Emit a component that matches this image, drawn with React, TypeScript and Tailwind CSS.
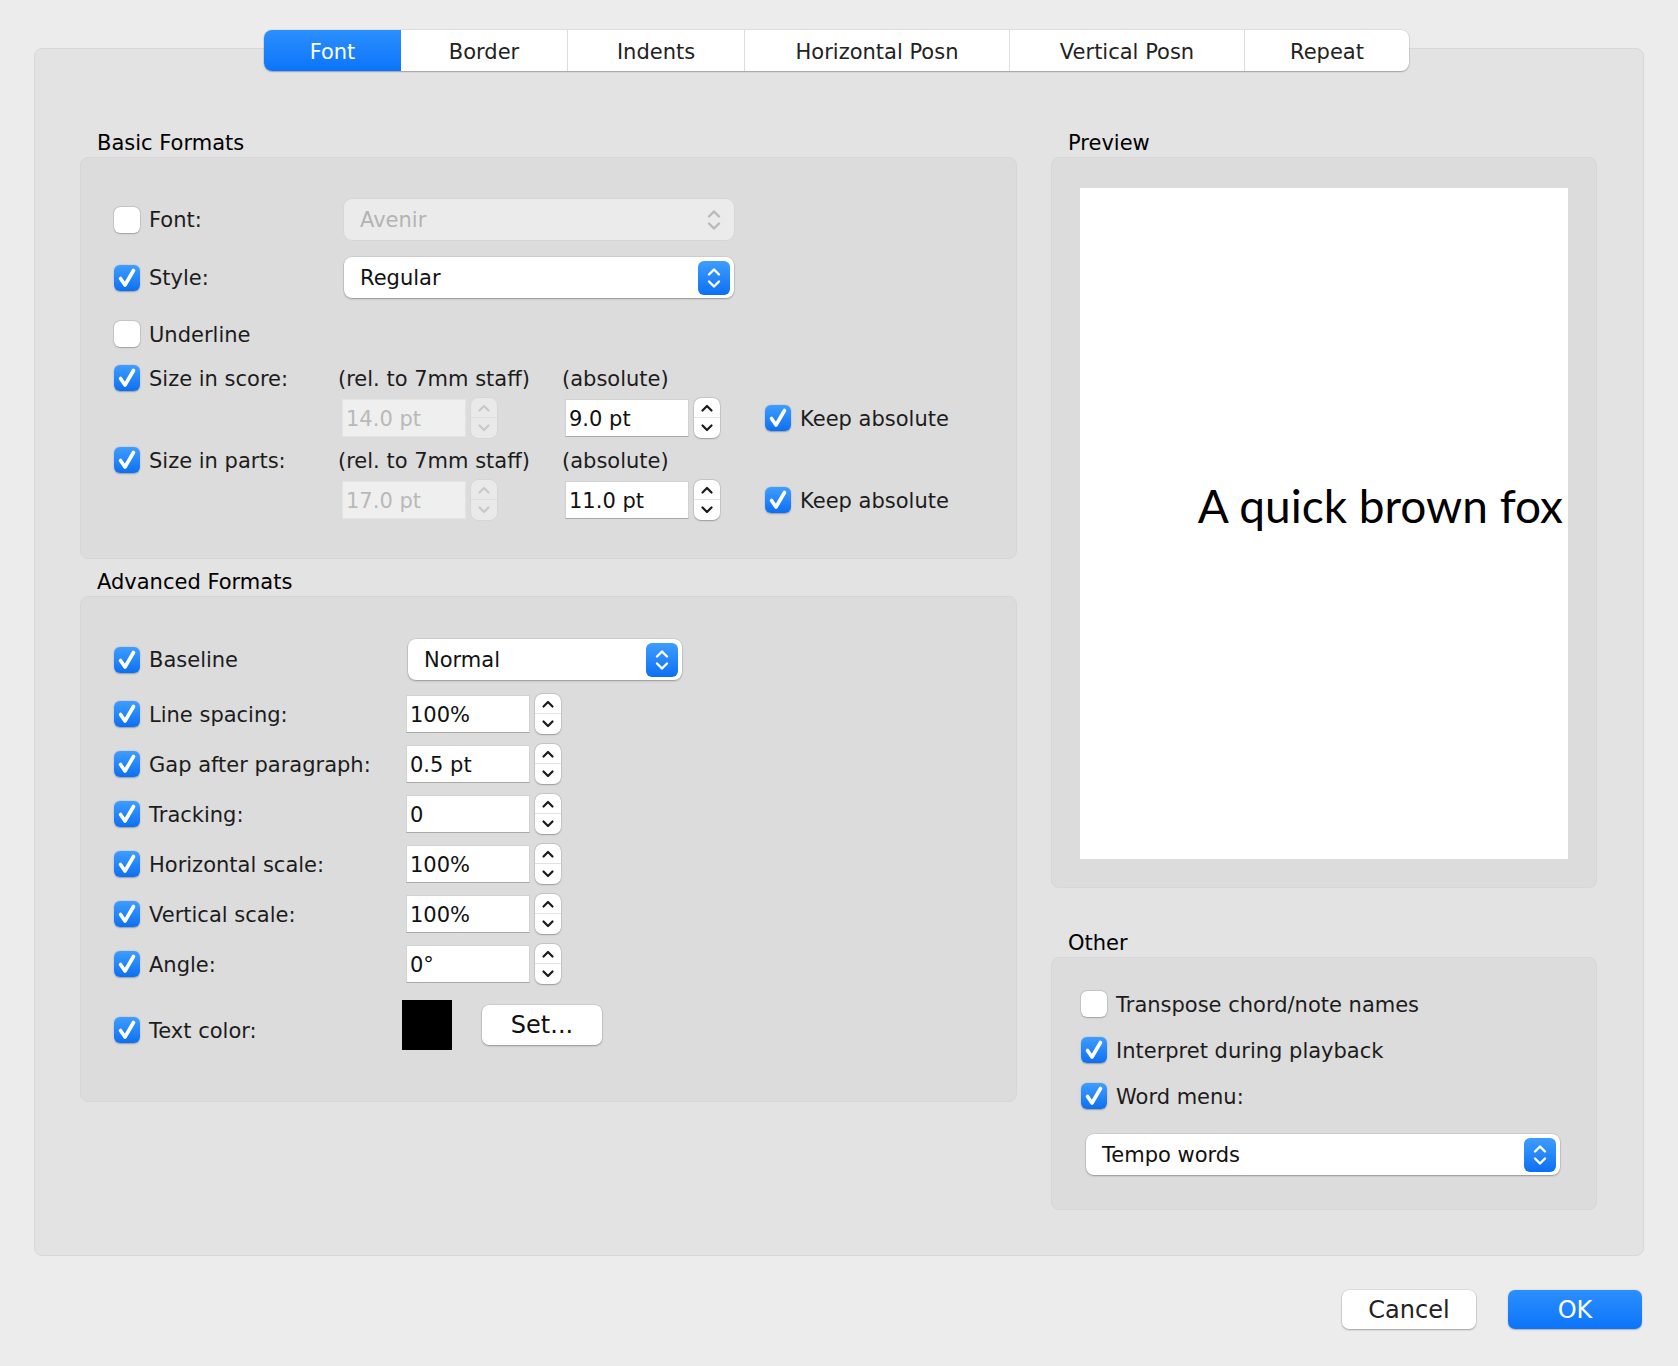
import React from 'react';

const TABS = [
    { label: 'Font', w: 'w-[137px]' },
    { label: 'Border', w: 'w-[166px]' },
    { label: 'Indents', w: 'w-[177px]' },
    { label: 'Horizontal Posn', w: 'w-[265px]' },
    { label: 'Vertical Posn', w: 'w-[235px]' },
    { label: 'Repeat', w: 'w-[165px]' },
];

const ADVANCED = [
    { label: 'Line spacing:', value: '100%' },
    { label: 'Gap after paragraph:', value: '0.5 pt' },
    { label: 'Tracking:', value: '0' },
    { label: 'Horizontal scale:', value: '100%' },
    { label: 'Vertical scale:', value: '100%' },
    { label: 'Angle:', value: '0°' },
];

function Check({ on }: { on?: boolean }) {
    if (!on) {
        return <span className="h-[26px] w-[26px] shrink-0 rounded-[6px] bg-white shadow-[0_0_0_0.5px_rgba(0,0,0,0.14),0_0.5px_1.5px_rgba(0,0,0,0.22)]" />;
    }
    return (
        <span className="flex h-[26px] w-[26px] shrink-0 items-center justify-center rounded-[6px] bg-linear-to-b from-[#3d9dff] to-[#0a6ff2] shadow-[0_0.5px_1.5px_rgba(0,0,0,0.3)]">
            <svg width="26" height="26" viewBox="0 0 26 26">
                <path d="M6.5 13.5 L11 20 L19.5 5.5" fill="none" stroke="white" strokeWidth="3.6" strokeLinecap="round" strokeLinejoin="round" />
            </svg>
        </span>
    );
}

function UpDown({ color }: { color: string }) {
    return (
        <svg width="16" height="28" viewBox="0 0 16 28">
            <path d="M3 10.5 L8 5.5 L13 10.5" fill="none" stroke={color} strokeWidth="2.4" strokeLinecap="round" strokeLinejoin="round" />
            <path d="M3 17.5 L8 22.5 L13 17.5" fill="none" stroke={color} strokeWidth="2.4" strokeLinecap="round" strokeLinejoin="round" />
        </svg>
    );
}

function Stepper({ off }: { off?: boolean }) {
    const c = off ? '#c8c8c8' : '#1a1a1a';
    return (
        <div className={`flex h-[40px] w-[26px] shrink-0 flex-col rounded-[7px] ${off ? 'bg-[#e9e9e9] shadow-[0_0_0_0.5px_rgba(0,0,0,0.05)]' : 'bg-white shadow-[0_0_0_0.5px_rgba(0,0,0,0.12),0_0.5px_1.5px_rgba(0,0,0,0.25)]'}`}>
            <div className={`flex h-1/2 items-center justify-center border-b ${off ? 'border-[#dedede]' : 'border-[#e2e2e2]'}`}>
                <svg width="14" height="10" viewBox="0 0 14 10"><path d="M2.5 7.5 L7 3 L11.5 7.5" fill="none" stroke={c} strokeWidth="2.2" strokeLinecap="round" strokeLinejoin="round" /></svg>
            </div>
            <div className="flex h-1/2 items-center justify-center">
                <svg width="14" height="10" viewBox="0 0 14 10"><path d="M2.5 2.5 L7 7 L11.5 2.5" fill="none" stroke={c} strokeWidth="2.2" strokeLinecap="round" strokeLinejoin="round" /></svg>
            </div>
        </div>
    );
}

function Field({ value, off }: { value: string; off?: boolean }) {
    return (
        <div className={`flex h-[38px] w-[124px] shrink-0 items-center border pl-[3px] pt-[2px] ${off ? 'border-[#e4e4e4] bg-[#efefef] text-[#b9b9b9]' : 'border-[#d2d2d2] border-b-[#a9a9a9] bg-white text-[#111]'}`}>
            {value}
        </div>
    );
}

function Popup({ value, w, off }: { value: string; w: string; off?: boolean }) {
    return (
        <div className={`flex h-[41px] ${w} shrink-0 items-center justify-between rounded-[8px] pl-[16px] pr-[4px] ${off ? 'bg-[#ebebeb] text-[#b3b3b3] shadow-[0_0_0_0.5px_rgba(0,0,0,0.06)]' : 'bg-white text-[#111] shadow-[0_0_0_0.5px_rgba(0,0,0,0.12),0_1px_2px_rgba(0,0,0,0.28)]'}`}>
            <span className="pt-[2px]">{value}</span>
            {off ? (
                <span className="flex w-[32px] justify-center"><UpDown color="#b9b9b9" /></span>
            ) : (
                <span className="flex h-[34px] w-[32px] items-center justify-center rounded-[6px] bg-linear-to-b from-[#3d9dff] to-[#0a6ff2]">
                    <UpDown color="white" />
                </span>
            )}
        </div>
    );
}

function Labelled({ on, label, w }: { on?: boolean; label: string; w: string }) {
    return (
        <div className={`flex ${w} shrink-0 items-center gap-[9px]`}>
            <Check on={on} />
            <span className="pt-[2px]">{label}</span>
        </div>
    );
}

export default function App() {
    return (
        <div className="h-[1366px] w-[1678px] overflow-hidden bg-[#ececec] pt-[48px] font-['DejaVu_Sans',sans-serif] text-[21px] leading-none text-[#1c1c1c]">
            {/* tab panel */}
            <div className="relative mx-[34px] h-[1208px] rounded-[8px] border border-[#d8d8d8] bg-[#e3e3e3]">
                <div className="absolute left-[229px] top-[-19px] flex h-[41px] rounded-[8px] bg-white shadow-[0_0_0_0.5px_rgba(0,0,0,0.12),0_1px_1.5px_rgba(0,0,0,0.25)]">
                    {TABS.map((t, i) => (
                        <div
                            key={t.label}
                            className={`flex h-full ${t.w} items-center justify-center pt-[3px] ${i === 0 ? 'rounded-l-[8px] bg-linear-to-b from-[#2b8ffd] to-[#0a74fb] text-white' : 'text-[#222]'} ${i > 1 ? 'border-l border-[#dcdcdc]' : ''}`}
                        >
                            {t.label}
                        </div>
                    ))}
                </div>

                <div className="flex gap-[34px] px-[45px] pt-[79px]">
                    {/* left column */}
                    <div className="w-[937px]">
                        <div className="flex h-[29px] items-center pl-[17px] pt-[2px] text-black">Basic Formats</div>
                        <div className="h-[402px] rounded-[8px] border border-[#d6d6d6] bg-[#dcdcdc] pl-[33px] pt-[41px]">
                            <div className="flex h-[41px] items-center">
                                <Labelled label="Font:" w="w-[230px]" />
                                <Popup value="Avenir" w="w-[390px]" off />
                            </div>
                            <div className="mt-[17px] flex h-[41px] items-center">
                                <Labelled on label="Style:" w="w-[230px]" />
                                <Popup value="Regular" w="w-[390px]" />
                            </div>
                            <div className="mt-[23px] flex h-[26px] items-center">
                                <Labelled label="Underline" w="w-[230px]" />
                            </div>
                            <div className="mt-[18px] flex h-[26px] items-center">
                                <Labelled on label="Size in score:" w="w-[224px]" />
                                <span className="w-[224px] pt-[2px]">(rel. to 7mm staff)</span>
                                <span className="pt-[2px]">(absolute)</span>
                            </div>
                            <div className="mt-[7px] flex h-[40px] items-center">
                                <div className="w-[228px] shrink-0" />
                                <Field value="14.0 pt" off />
                                <div className="ml-[5px]"><Stepper off /></div>
                                <div className="ml-[68px]"><Field value="9.0 pt" /></div>
                                <div className="ml-[5px]"><Stepper /></div>
                                <div className="ml-[45px] flex items-center gap-[9px]"><Check on /><span className="pt-[2px]">Keep absolute</span></div>
                            </div>
                            <div className="mt-[9px] flex h-[26px] items-center">
                                <Labelled on label="Size in parts:" w="w-[224px]" />
                                <span className="w-[224px] pt-[2px]">(rel. to 7mm staff)</span>
                                <span className="pt-[2px]">(absolute)</span>
                            </div>
                            <div className="mt-[7px] flex h-[40px] items-center">
                                <div className="w-[228px] shrink-0" />
                                <Field value="17.0 pt" off />
                                <div className="ml-[5px]"><Stepper off /></div>
                                <div className="ml-[68px]"><Field value="11.0 pt" /></div>
                                <div className="ml-[5px]"><Stepper /></div>
                                <div className="ml-[45px] flex items-center gap-[9px]"><Check on /><span className="pt-[2px]">Keep absolute</span></div>
                            </div>
                        </div>

                        <div className="mt-[8px] flex h-[29px] items-center pl-[17px] pt-[2px] text-black">Advanced Formats</div>
                        <div className="h-[506px] rounded-[8px] border border-[#d6d6d6] bg-[#dcdcdc] pl-[33px] pt-[42px]">
                            <div className="flex h-[41px] items-center">
                                <Labelled on label="Baseline" w="w-[294px]" />
                                <Popup value="Normal" w="w-[274px]" />
                            </div>
                            {ADVANCED.map((r, i) => (
                                <div key={r.label} className={`${i === 0 ? 'mt-[14px]' : 'mt-[10px]'} flex h-[40px] items-center`}>
                                    <Labelled on label={r.label} w="w-[292px]" />
                                    <Field value={r.value} />
                                    <div className="ml-[5px]"><Stepper /></div>
                                </div>
                            ))}
                            <div className="mt-[16px] flex h-[50px] items-center">
                                <div className="mt-[10px] flex w-[288px] shrink-0 items-center gap-[9px]">
                                    <Check on />
                                    <span className="pt-[2px]">Text color:</span>
                                </div>
                                <div className="h-[50px] w-[50px] bg-black" />
                                <button className="ml-[30px] flex h-[40px] w-[120px] items-center justify-center rounded-[7px] bg-white text-[24px] text-[#111] shadow-[0_0_0_0.5px_rgba(0,0,0,0.12),0_1px_2px_rgba(0,0,0,0.28)]">
                                    Set...
                                </button>
                            </div>
                        </div>
                    </div>

                    {/* right column */}
                    <div className="w-[546px]">
                        <div className="flex h-[29px] items-center pl-[17px] pt-[2px] text-black">Preview</div>
                        <div className="h-[731px] rounded-[8px] border border-[#d6d6d6] bg-[#dcdcdc] pb-[28px] pl-[28px] pr-[28px] pt-[30px]">
                            <div className="flex h-full items-center justify-end overflow-hidden bg-white pb-[36px] pr-[5px]">
                                <span className="whitespace-nowrap font-['Lato',sans-serif] text-[46px] text-black">A quick brown fox</span>
                            </div>
                        </div>

                        <div className="mt-[40px] flex h-[29px] items-center pl-[17px] pt-[2px] text-black">Other</div>
                        <div className="h-[253px] rounded-[8px] border border-[#d6d6d6] bg-[#dcdcdc] pl-[29px] pt-[33px]">
                            <div className="flex h-[26px] items-center gap-[9px]"><Check /><span className="pt-[2px]">Transpose chord/note names</span></div>
                            <div className="mt-[20px] flex h-[26px] items-center gap-[9px]"><Check on /><span className="pt-[2px]">Interpret during playback</span></div>
                            <div className="mt-[20px] flex h-[26px] items-center gap-[9px]"><Check on /><span className="pt-[2px]">Word menu:</span></div>
                            <div className="ml-[5px] mt-[25px]">
                                <Popup value="Tempo words" w="w-[474px]" />
                            </div>
                        </div>
                    </div>
                </div>
            </div>

            <div className="mt-[34px] flex justify-end gap-[32px] pr-[36px]">
                <button className="flex h-[39px] w-[134px] items-center justify-center rounded-[7px] bg-white text-[24px] text-[#222] shadow-[0_0_0_0.5px_rgba(0,0,0,0.12),0_1px_2px_rgba(0,0,0,0.28)]">
                    Cancel
                </button>
                <button className="flex h-[39px] w-[134px] items-center justify-center rounded-[7px] bg-linear-to-b from-[#2b8ffd] to-[#0a74fb] text-[24px] text-white shadow-[0_0.5px_1.5px_rgba(0,0,0,0.25)]">
                    OK
                </button>
            </div>
        </div>
    );
}
